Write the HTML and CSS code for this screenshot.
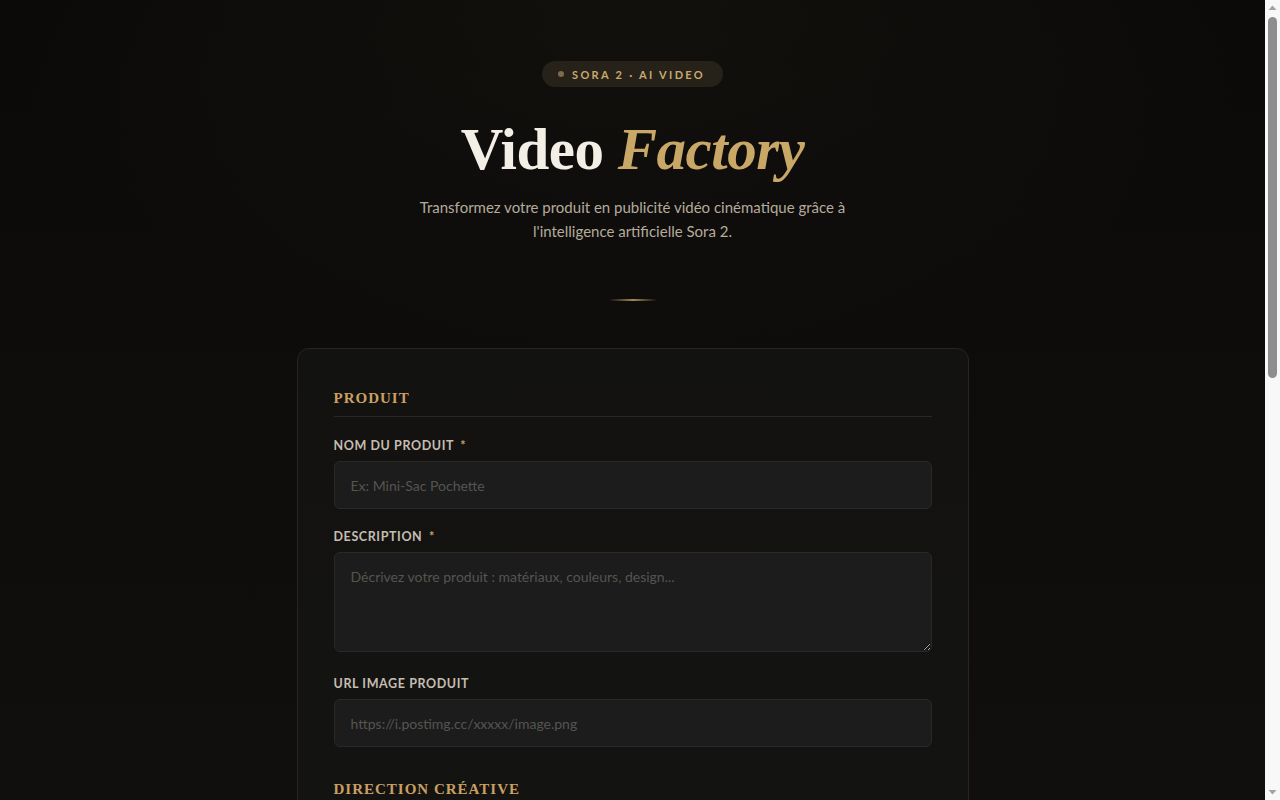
FILE: index.html
```html
<!DOCTYPE html>
<html lang="fr">
<head>
<meta charset="utf-8">
<title>Video Factory</title>
<link rel="stylesheet" href="styles.css">
</head>
<body>
<div class="viewport">
<main class="page">
  <header class="hero">
    <div class="badge"><span class="badge-dot"></span>SORA 2 · AI VIDEO</div>
    <h1 class="title">Video <em>Factory</em></h1>
    <p class="subtitle">Transformez votre produit en publicité vidéo cinématique grâce à l'intelligence artificielle Sora 2.</p>
    <div class="divider"></div>
  </header>

  <form class="card">
    <section class="section">
      <h2 class="section-title">Produit</h2>
      <div class="field">
        <label class="label">Nom du produit <span class="req">*</span></label>
        <input class="input" type="text" placeholder="Ex: Mini-Sac Pochette">
      </div>
      <div class="field">
        <label class="label">Description <span class="req">*</span></label>
        <textarea class="input textarea" placeholder="Décrivez votre produit : matériaux, couleurs, design..."></textarea>
      </div>
      <div class="field">
        <label class="label">URL image produit</label>
        <input class="input" type="text" placeholder="https://i.postimg.cc/xxxxx/image.png">
      </div>
    </section>

    <section class="section">
      <h2 class="section-title">Direction créative</h2>
      <div class="field">
        <label class="label">Style visuel</label>
        <input class="input" type="text" placeholder="Ex: Luxe, minimaliste, lumière naturelle">
      </div>
      <div class="row">
        <div class="field">
          <label class="label">Ambiance</label>
          <input class="input" type="text" placeholder="Élégante">
        </div>
        <div class="field">
          <label class="label">Durée</label>
          <input class="input" type="text" placeholder="10 secondes">
        </div>
      </div>
      <div class="field">
        <label class="label">Public cible</label>
        <input class="input" type="text" placeholder="Ex: Femmes 25-40 ans, urbaines">
      </div>
      <div class="field">
        <label class="label">Instructions supplémentaires</label>
        <textarea class="input textarea" placeholder="Mouvements de caméra, décor, musique..."></textarea>
      </div>
    </section>

    <section class="section">
      <h2 class="section-title">Format</h2>
      <div class="row">
        <div class="field">
          <label class="label">Ratio</label>
          <input class="input" type="text" placeholder="16:9">
        </div>
        <div class="field">
          <label class="label">Qualité</label>
          <input class="input" type="text" placeholder="1080p">
        </div>
      </div>
    </section>

    <button class="submit" type="button">Générer la vidéo</button>
  </form>
</main>
</div>
<div class="scrollbar" aria-hidden="true">
  <div class="sb-btn"><svg width="15" height="17" viewBox="0 0 15 17"><polygon points="3.5,10 7.5,5.5 11.5,10" fill="#a3a3a3"/></svg></div>
  <div class="sb-track">
    <div class="sb-thumb"></div>
  </div>
  <div class="sb-btn"><svg width="15" height="17" viewBox="0 0 15 17"><polygon points="3.5,7 7.5,11.5 11.5,7" fill="#a3a3a3"/></svg></div>
</div>
</body>
</html>
```
FILE: styles.css
```css
* { box-sizing: border-box; }

html, body {
  margin: 0;
  padding: 0;
  height: 100%;
  overflow: hidden;
}

body {
  display: flex;
  background-color: #0c0b0a;
  font-family: "Lato", "Noto Sans", sans-serif;
  color: #e8e2d6;
}

.viewport {
  flex: 1;
  height: 100vh;
  overflow-y: auto;
  background-image:
    radial-gradient(ellipse 900px 500px at 50% 0%, rgba(40, 34, 24, 0.25), rgba(0,0,0,0) 70%),
    linear-gradient(180deg, #0b0a09 0%, #100f0e 100%);
}

.scrollbar {
  width: 15px;
  flex: none;
  height: 100vh;
  display: flex;
  flex-direction: column;
  background: #f8f8f8;
}

.sb-btn {
  height: 17px;
  flex: none;
}

.sb-btn svg { display: block; }

.sb-track {
  flex: 1;
  padding: 0 3px;
}

.sb-thumb {
  height: 361px;
  border-radius: 5px;
  background: #8e8e8e;
}

.page {
  width: 672px;
  margin: 0 auto;
  padding: 61px 0 80px;
}

.hero {
  display: flex;
  flex-direction: column;
  align-items: center;
  text-align: center;
}

.badge {
  display: inline-flex;
  align-items: center;
  gap: 8px;
  height: 26px;
  padding: 0 18px 0 16px;
  border-radius: 13px;
  background: #262119;
  color: #c9a96e;
  font-size: 11px;
  font-weight: 700;
  letter-spacing: 2.3px;
}

.badge-dot {
  width: 6px;
  height: 6px;
  border-radius: 50%;
  background: #7d6b4b;
}

.title {
  margin: 26px 0 0;
  font-family: "Liberation Serif", "DejaVu Serif", serif;
  font-weight: 700;
  font-size: 59px;
  line-height: 72px;
  color: #f3eee6;
  letter-spacing: -0.5px;
}

.title em {
  font-style: italic;
  color: #c9a766;
}

.subtitle {
  margin: 10px 0 0;
  max-width: 450px;
  font-size: 15px;
  line-height: 24px;
  color: #b5ab9b;
}

.divider {
  width: 48px;
  height: 2px;
  margin-top: 56px;
  background: linear-gradient(90deg, rgba(201,167,102,0), rgba(201,167,102,0.8), rgba(201,167,102,0));
}

.card {
  margin-top: 47px;
  padding: 41px 36px 40px;
  border: 1px solid #262523;
  border-radius: 12px;
  background: rgba(22, 21, 20, 0.7);
  display: flex;
  flex-direction: column;
}

.section {
  display: flex;
  flex-direction: column;
  margin-bottom: 14px;
}

.section-title {
  margin: 0 0 21px;
  padding-bottom: 9px;
  border-bottom: 1px solid #2a2826;
  font-family: "Liberation Serif", "DejaVu Serif", serif;
  font-weight: 700;
  font-size: 15px;
  letter-spacing: 1px;
  text-transform: uppercase;
  color: #c9a062;
}

.field {
  display: flex;
  flex-direction: column;
  margin-bottom: 20px;
  flex: 1;
}

.row {
  display: flex;
  gap: 16px;
}

.label {
  font-size: 12.5px;
  font-weight: 700;
  letter-spacing: 0.6px;
  text-transform: uppercase;
  color: #c5bdb0;
  margin-bottom: 8px;
  line-height: 15px;
}

.req {
  color: #c9a062;
  margin-left: 3px;
}

.input {
  width: 100%;
  height: 48px;
  padding: 0 16px;
  border: 1px solid #2a2928;
  border-radius: 6px;
  background: #1c1c1c;
  font-family: "Lato", "Noto Sans", sans-serif;
  font-size: 14px;
  color: #e8e2d6;
  outline: none;
}

.input::placeholder {
  color: #565451;
}

.textarea {
  display: block;
  height: 100px;
  margin-bottom: 4px;
  padding: 14px 16px;
  resize: vertical;
  line-height: 20px;
}

.submit {
  height: 54px;
  border: none;
  border-radius: 8px;
  background: linear-gradient(90deg, #b8935a, #d4b37a);
  color: #14110c;
  font-family: "Lato", "Noto Sans", sans-serif;
  font-size: 14px;
  font-weight: 700;
  letter-spacing: 2px;
  text-transform: uppercase;
}
```
